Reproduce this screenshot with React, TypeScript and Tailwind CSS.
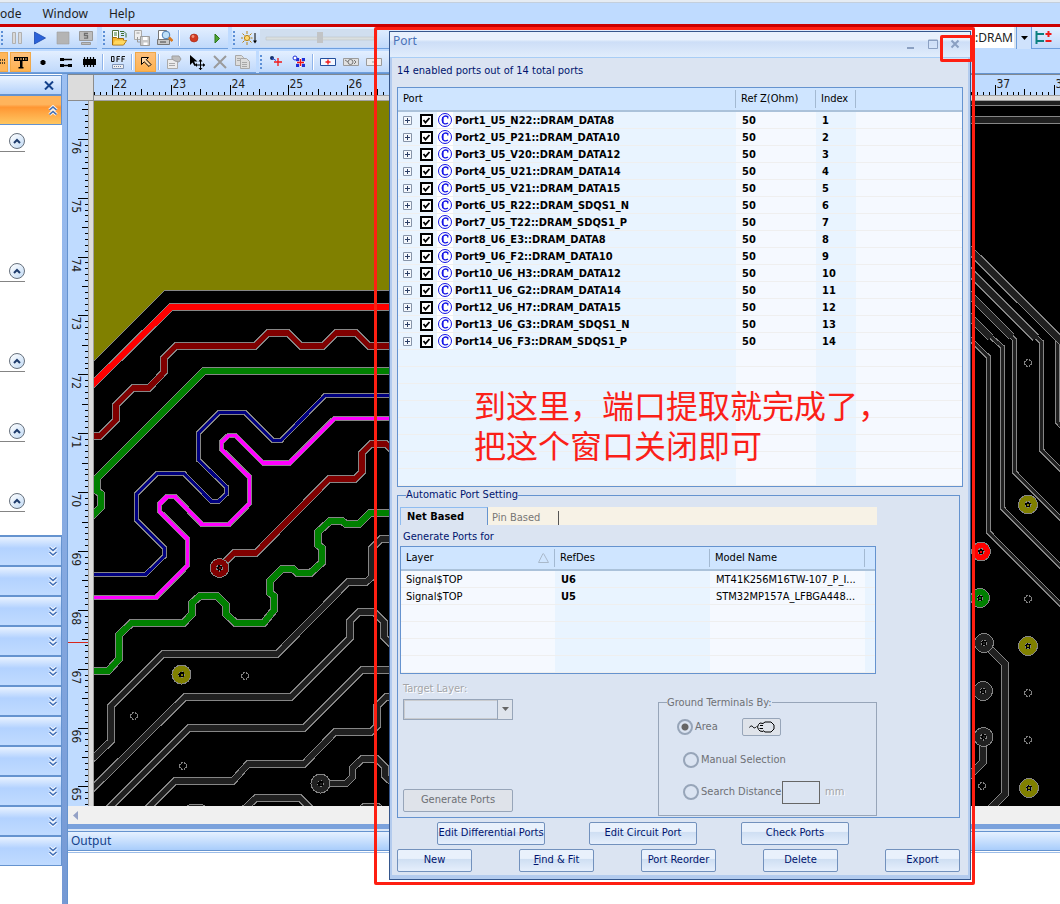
import type { ReactNode } from "react";

type Point = [number, number];

/* ------------------------------------------------------------------ */
/* Board canvas                                                        */
/* ------------------------------------------------------------------ */

function Trace({ points, color, width }: { points: Point[]; color: string; width: number }) {
  const path = points.map((p) => p.join(",")).join(" ");
  return (
    <g fill="none" strokeLinejoin="miter">
      <polyline points={path} stroke="#868686" strokeWidth={width + 2} />
      <polyline points={path} stroke={color} strokeWidth={width} />
    </g>
  );
}

function Via({ x, y, color }: { x: number; y: number; color: string }) {
  return (
    <g>
      <circle cx={x} cy={y} r={9.5} fill={color} stroke="#868686" />
      <circle cx={x} cy={y} r={3} fill="#000" stroke="#868686" strokeWidth={1} strokeDasharray="2 1.500" />
      <rect x={x - 1} y={y - 1} width={2} height={2} fill={color} />
    </g>
  );
}

function Hole({ x, y }: { x: number; y: number }) {
  return <circle cx={x} cy={y} r={3.5} fill="#000" stroke="#808080" strokeWidth={1.4} strokeDasharray="2 0.8" />;
}

const DARK = "#202020";
const OLIVE = "#808000";
const GREEN = "#008000";
const MAROON = "#800000";

const traces: { color: string; width: number; points: Point[] }[] = [
  { color: "#ff0000", width: 6, points: [[90, 387], [171, 307], [400, 307]] },
  {
    color: MAROON,
    width: 5.5,
    points: [[90, 436], [100, 436], [116, 420], [116, 405], [133, 388], [149, 388], [164, 372], [164, 358], [176, 346], [255, 346], [268, 333], [288, 333], [301, 346], [323, 346], [336, 333], [356, 333], [369, 346], [400, 346]],
  },
  { color: GREEN, width: 6, points: [[90, 518], [101, 507], [101, 494], [97, 491], [97, 478], [204, 371], [400, 371]] },
  {
    color: "#000080",
    width: 3,
    points: [[90, 574], [146, 574], [164.5, 556], [164.5, 548], [136.5, 520], [136.5, 494], [157, 473.5], [184, 473.5], [211, 501], [219, 501], [226.5, 494], [226.5, 487], [198.5, 460], [198.5, 433], [219, 412.5], [245, 412.5], [273, 440.5], [281, 440.5], [325, 395.5], [400, 395.5]],
  },
  {
    color: "#ff00ff",
    width: 3.6,
    points: [[90, 597.5], [156, 597.5], [187.5, 565.5], [187.5, 539], [159.5, 511.5], [159.5, 504], [167, 496.5], [175, 496.5], [202, 524.5], [229, 524.5], [249.5, 503.5], [249.5, 477], [221.5, 449.5], [221.5, 442], [228.5, 435.5], [235.5, 435.5], [263, 463], [289.5, 463], [334.5, 418.5], [400, 418.5]],
  },
  { color: MAROON, width: 5.5, points: [[220, 567], [234, 553], [256, 553], [329, 479], [355, 479], [362, 472], [362, 453], [371, 444], [386, 444], [392, 450]] },
  {
    color: GREEN,
    width: 6,
    points: [[90, 671], [108, 671], [119, 659], [119, 635], [132, 622.5], [184, 622.5], [192, 614], [192, 603], [200, 596], [217, 596], [226, 605], [226, 614], [235, 622.5], [264, 622.5], [274, 610], [274, 596], [270, 593], [270, 581], [282, 569], [293, 569], [297, 572.5], [311, 572.5], [322, 562.5], [322, 548], [318, 545], [318, 532], [330, 521], [342, 521], [346, 524], [359, 524], [370, 513], [400, 513]],
  },
  { color: DARK, width: 5.5, points: [[400, 539], [381, 539], [372, 548], [372, 577], [366, 582], [348, 582], [277, 654], [163, 654], [111, 706], [111, 741], [90, 761]] },
  { color: DARK, width: 5.5, points: [[400, 653], [384, 637], [384, 622], [374, 612], [359, 612], [350, 621], [350, 638], [291, 697], [185, 697], [90, 791]] },
  { color: DARK, width: 5.5, points: [[400, 670], [362, 670], [304, 728], [189, 728], [105, 812]] },
  { color: DARK, width: 5.5, points: [[400, 697], [386, 697], [377, 706], [377, 726], [371, 732], [335, 732], [304, 764], [248, 764], [233, 781], [175, 781], [144, 812]] },
  { color: DARK, width: 5.5, points: [[320, 783.5], [346, 783.5], [352.5, 777], [352.5, 768], [362, 759], [377, 759], [385, 767], [385, 776], [400, 790]] },
  { color: DARK, width: 5.5, points: [[241, 812], [256, 798], [300, 798], [314, 812]] },
  { color: DARK, width: 5.5, points: [[180, 814], [190, 808], [202, 808], [212, 814]] },
  { color: DARK, width: 5.5, points: [[355, 814], [364, 807], [378, 807], [387, 814]] },
  { color: DARK, width: 5, points: [[960, 102], [1400, 102]] },
  { color: DARK, width: 6, points: [[960, 120], [1400, 120]] },
  { color: DARK, width: 3.5, points: [[1057.5, 336], [1057.5, 422], [1090, 455]] },
  { color: DARK, width: 6.5, points: [[960, 240], [1090, 370]] },
  { color: DARK, width: 3, points: [[1035, 336], [1041.5, 342], [1041.5, 450], [1090, 499]] },
  { color: DARK, width: 6.5, points: [[960, 262], [1036, 338]] },
  { color: DARK, width: 3, points: [[1010, 335], [1014.5, 340], [1014.5, 472], [1090, 548]] },
  { color: DARK, width: 6, points: [[960, 285], [1012, 337]] },
  { color: DARK, width: 3, points: [[990, 336], [1002.5, 347], [1002.5, 508], [1090, 596]] },
  { color: DARK, width: 6, points: [[960, 307], [991, 338]] },
  { color: DARK, width: 3, points: [[960, 329], [988.5, 357], [988.5, 532], [1090, 634]] },
  { color: DARK, width: 6, points: [[984, 643], [1005, 664], [1005, 794], [985, 814]] },
  { color: DARK, width: 6, points: [[983, 738], [983, 762], [965, 780]] },
];

const vias: { x: number; y: number; color: string }[] = [
  { x: 219.5, y: 568, color: MAROON },
  { x: 181.5, y: 674.5, color: OLIVE },
  { x: 320.5, y: 783.5, color: DARK },
  { x: 1028, y: 504.5, color: OLIVE },
  { x: 981, y: 551.5, color: "#ff0000" },
  { x: 980, y: 598, color: GREEN },
  { x: 984, y: 643, color: DARK },
  { x: 1028, y: 646, color: OLIVE },
  { x: 983, y: 691, color: DARK },
  { x: 983.5, y: 737, color: DARK },
  { x: 1029, y: 788, color: OLIVE },
];

const holes: Point[] = [[245, 676], [134, 716], [183, 766], [1028, 363], [1028, 599], [1028, 693], [1028, 740], [982, 786]];

function Board() {
  return (
    <svg className="block h-full w-full bg-black" shapeRendering="crispEdges" aria-hidden="true">
      <g transform="translate(-94 -101)">
        <polygon points="94,100 400,100 400,290 164,290 94,361" fill={OLIVE} />
        <polyline points="400,290.5 164.5,290.5 94,361" fill="none" stroke="#868686" />
        {traces.map((t, i) => (
          <Trace key={i} {...t} />
        ))}
        {vias.map((v, i) => (
          <Via key={i} {...v} />
        ))}
        {holes.map(([x, y], i) => (
          <Hole key={i} x={x} y={y} />
        ))}
      </g>
    </svg>
  );
}

const UNIT = 58.87;

function ticks(count: number, first: number) {
  return Array.from({ length: count }, (_, i) => {
    const size = i % 10 === 0 ? 10 : i % 5 === 0 ? 6 : 3;
    return { at: Math.round(first + (i * UNIT) / 10) + 0.5, size, major: i % 10 === 0, index: i / 10 };
  }).filter((t) => t.at > 0);
}

function TopRuler() {
  return (
    <svg className="block h-[20px] w-full bg-[#bfdbff]" aria-hidden="true">
      {ticks(172, -41).map((t, i) => (
        <g key={i}>
          <line x1={t.at} x2={t.at} y1={20 - t.size} y2={20} stroke="#000" shapeRendering="crispEdges" />
          {t.major && (
            <text x={t.at + 1} y={13} fontSize={12} fill="#222" fontFamily="'DejaVu Sans Condensed','DejaVu Sans',sans-serif">
              {21 + t.index}
            </text>
          )}
        </g>
      ))}
    </svg>
  );
}

function SideRuler() {
  return (
    <svg className="block h-full w-[20px] bg-[#bfdbff]" aria-hidden="true">
      {ticks(125, -21).map((t, i) => (
        <g key={i}>
          <line y1={t.at} y2={t.at} x1={20 - t.size} x2={20} stroke="#000" shapeRendering="crispEdges" />
          {t.major && (
            <text transform={`translate(4 ${t.at + 1}) rotate(90)`} fontSize={12} fill="#222" fontFamily="'DejaVu Sans Condensed','DejaVu Sans',sans-serif">
              {77 - t.index}
            </text>
          )}
        </g>
      ))}
      <line x1={0} x2={20} y1={541.5} y2={541.5} stroke="#d8261c" />
    </svg>
  );
}

/* ------------------------------------------------------------------ */
/* Toolbars                                                            */
/* ------------------------------------------------------------------ */

function Grip() {
  return (
    <svg width="5" height="16" viewBox="0 0 5 16" className="shrink-0" aria-hidden="true">
      {[0, 4, 8, 12].map((y) => (
        <rect key={y} x="1" y={y + 1} width="2" height="2" fill="#5c8fd6" />
      ))}
    </svg>
  );
}

function Strip({ children, className = "" }: { children: ReactNode; className?: string }) {
  return (
    <div className={`flex h-[22px] shrink-0 items-center border-b border-[#6e9fde] bg-linear-to-b from-[#e3efff] to-[#c0d9fb] ${className}`}>
      {children}
    </div>
  );
}

function Separator() {
  return <span className="mx-[2px] h-4 w-[2px] shrink-0 border-l border-[#8fb4ea] bg-white" />;
}

function Tool({ label, active = false, children }: { label: string; active?: boolean; children: ReactNode }) {
  return (
    <button
      type="button"
      aria-label={label}
      className={
        active
          ? "flex h-5 w-[21px] shrink-0 items-center justify-center border border-[#f0a848] bg-linear-to-b from-[#fdc07c] to-[#ffb24e]"
          : "flex h-5 w-[23px] shrink-0 items-center justify-center"
      }
    >
      <svg width="16" height="16" viewBox="0 0 16 16" className="shrink-0">
        {children}
      </svg>
    </button>
  );
}

function Toolbars() {
  return (
    <div className="h-[46px] overflow-hidden bg-[#bfdbff]">
      <div className="flex">
        <Strip className="w-[97px]">
          <Grip />
          <Tool label="Pause">
            <path d="M3.500 2.500h3v11h-3zM9.500 2.500h3v11h-3z" fill="#d9d9d9" stroke="#b0b0b0" />
          </Tool>
          <Tool label="Run">
            <path d="M2.500 2v12L13.500 8z" fill="#2b62d9" stroke="#1b49ae" strokeWidth=".8" />
          </Tool>
          <Tool label="Stop">
            <path d="M2 2h12v12H2z" fill="#b4b4b4" stroke="#9d9d9d" strokeWidth=".6" />
          </Tool>
          <Tool label="Solver">
            <path d="M1.500 1.500h13v9h-13zM3.500 12.500h9v2h-9z" fill="#bdbdbd" stroke="#999" />
            <path d="M10 3.500H6.500v2.200h3v2.500H6" fill="none" stroke="#6f6f6f" strokeWidth="1.300" />
          </Tool>
        </Strip>
        <Strip className="ml-[5px] w-[126px]">
          <Grip />
          <Tool label="Open">
            <path d="M1.500.5h6v10h-6z" fill="#fff" stroke="#55703c" />
            <path d="M3 3h3M3 5h3" stroke="#3a7a38" />
            <path d="M9 1.500h4l2 2v4M10 3.500h3M10 5.500h3" fill="none" stroke="#3b6d33" />
            <path d="M1.500 15V7.500h4l1 1h6v2h3l-3 4.500z" fill="#f5b832" stroke="#a26a0c" />
            <path d="M4 10.500h11L12.500 14.500H2z" fill="#ffd75e" />
          </Tool>
          <Tool label="Import">
            <path d="M.5.5h7v9h-7z" fill="#eee" stroke="#ababab" />
            <path d="M6.500 6.500h9v9h-9z" fill="#c9c9c9" stroke="#9d9d9d" />
            <path d="M9 7h4.500v3H9zM9.500 12.500h4v2.500h-4z" fill="#fff" />
            <path d="M2.500 3h3M3.500 7v5h3" fill="none" stroke="#999" />
          </Tool>
          <Tool label="Preview">
            <path d="M1.500.5h8v11h-8z" fill="#fff" stroke="#777" />
            <path d="M.5 9.500h12v5H.5z" fill="#c7c7c7" stroke="#777" />
            <path d="M3 12h6" stroke="#444" />
            <circle cx="9" cy="5" r="3.800" fill="#bfe0f8" stroke="#4e7fb5" />
            <path d="M12 7.500l3.500 3.500" stroke="#d9791e" strokeWidth="2.600" />
          </Tool>
          <Separator />
          <Tool label="Record">
            <circle cx="8" cy="8" r="4" fill="#cf3a22" stroke="#a32714" strokeWidth=".6" />
            <circle cx="7" cy="6.500" r="1.400" fill="#f09078" />
          </Tool>
          <Tool label="Step">
            <path d="M6 4v9l4.500-4.500z" fill="#4ea632" stroke="#2b741a" />
          </Tool>
        </Strip>
        <Strip className="ml-1 min-w-0 flex-1">
          <Grip />
          <Tool label="Brightness">
            <g stroke="#b88416" fill="none">
              <path d="M6 1v3M6 12v3M-1 8h3M9.500 8h2M1.500 3.500l2 2M8.500 10.500l2 2M10.500 3.500l-2 2M3.500 10.500l-2 2" />
              <circle cx="6" cy="8" r="2.600" fill="#ffd970" />
            </g>
            <path d="M14 3v9" stroke="#000" />
            <path d="M12 10.500h4L14 13.500z" />
          </Tool>
          <svg width="118" height="18" viewBox="0 0 118 18" className="shrink-0" aria-hidden="true">
            <rect width="118" height="18" fill="#d0deef" />
            <path d="M6 8h108v3H6z" fill="#dadfdf" stroke="#bcc3c8" strokeWidth=".6" />
            <path d="M57 3h6v11h-6z" fill="#c2c4c6" />
          </svg>
        </Strip>
        <div className="flex h-[22px] shrink-0">
          <input
            aria-label="Net name"
            defaultValue=":DRAM"
            className="h-[21px] w-[41px] border-r-2 border-[#dce6f0] bg-white font-['Noto_Sans',sans-serif] text-[12px] text-[#222] outline-none"
          />
          <button type="button" aria-label="Show nets" className="flex w-4 items-center justify-center border-x border-[#6e9fde] bg-[#cfe2fc]">
            <svg width="7" height="4" viewBox="0 0 7 4"><path d="M0 0h7L3.500 4z" /></svg>
          </button>
          <div className="flex h-[22px] w-7 items-center border-b border-[#6e9fde] bg-linear-to-b from-[#e3efff] to-[#c0d9fb]">
            <button type="button" aria-label="Expand nets" className="pl-[3px]">
              <svg width="17" height="16" viewBox="0 0 17 16" fill="none" className="block">
                <path d="M1.500 1v13M1 4h8M1 11h8" stroke="#0b8080" strokeWidth="2" />
                <path d="M10.500 4h6M13.500 1v6M10.500 11h6" stroke="#f01818" strokeWidth="2" />
              </svg>
            </button>
          </div>
        </div>
      </div>

      <div className="mt-[2px] flex">
        <Strip className="w-[256px]">
          <button type="button" aria-label="Trace" className="flex h-5 w-2 shrink-0 items-center border border-l-0 border-[#f0a848] bg-[#ffb65a]">
            <svg width="6" height="6" viewBox="0 0 6 6"><path d="M0 1h5M0 4h5" stroke="#222" strokeDasharray="1 1" strokeWidth="1.500" /></svg>
          </button>
          <span className="w-[2px] shrink-0" />
          <Tool label="Plane" active>
            <path d="M1 3.500h14M1 6.500h14" stroke="#000" />
            <path d="M1 5h14" stroke="#000" strokeWidth="2" strokeDasharray="1.500 1" />
            <path d="M7 7h2.500v6H7zM5.500 13h5v1.500h-5z" />
          </Tool>
          <Tool label="Node">
            <path d="M6.500 6h3v1h1v3h-1v1h-3v-1h-1V7h1z" />
          </Tool>
          <Tool label="Differential pair">
            <path d="M2 5.500h12M2 11.500h12" stroke="#000" strokeWidth="1.500" />
            <path d="M2 4h4v3H2zM2 10h4v3H2zM10 10h4v3h-4z" />
          </Tool>
          <Tool label="Component">
            <path d="M2 5h13v6H2z" />
            <path d="M3.500 3v10M6.500 3v10M9.500 3v10M12.500 3v10" stroke="#000" strokeWidth="1.200" />
          </Tool>
          <Separator />
          <Tool label="Off">
            <path d="M1.500 2.500h2.500v5H1.500zM7 8V2.500h3M7 5h2.500M12 8V2.500h3M12 5h2.500" fill="none" stroke="#111" />
            <path d="M2.500 10.500h11v4h-11z" fill="#eee" stroke="#8295b5" />
            <path d="M4 12.500h8" stroke="#6c80a8" strokeDasharray="1 1" />
          </Tool>
          <Separator />
          <Tool label="Select" active>
            <path d="M3.500 3.500h7l-2.200 2.200 4.700 4.800-2 2-4.800-4.700L3.500 10.500z" fill="#ffd9a8" stroke="#000" />
          </Tool>
          <Separator />
          <Tool label="Properties">
            <path d="M1.500 5.500h10v9h-10z" fill="#ececec" stroke="#ababab" />
            <path d="M6 2h7l2 3-2 3-4-1-3-2z" fill="#bdbdbd" stroke="#9f9f9f" />
            <path d="M3 9.500h6M3 11.500h6" stroke="#aaa" />
          </Tool>
          <Tool label="Move">
            <path d="M1 1v10l2.500-2.500L5.500 12l1.500-1-2-3.500h3.500z" />
            <path d="M11.500 6v10M6.500 11h10" stroke="#000" />
            <path d="M9.500 7.500l2-2.500 2 2.500zM9.500 14l2 2 2-2zM8 9l-2 2 2 2zM14 9l2 2-2 2z" />
          </Tool>
          <Tool label="Delete item">
            <path d="M2 2l12 12M14 2L2 14" stroke="#9b9b9b" strokeWidth="2" />
          </Tool>
          <Tool label="Copy">
            <g fill="#dcdcdc" stroke="#a8a8a8">
              <path d="M.5 1.500h6l2 2v8h-8z" />
              <path d="M5.500 4.500h6l3 3v7h-9z" />
              <path d="M2 4.500h3M2 6.500h3M7 8.500h5M7 10.500h5M7 12.500h5" />
            </g>
          </Tool>
        </Strip>
        <Strip className="ml-[3px] min-w-0 max-w-[704px] flex-1">
          <Grip />
          <Tool label="Add node">
            <circle cx="4" cy="4" r="2" fill="#14306a" />
            <path d="M10 4v8M6 8h8" stroke="#f01818" strokeWidth="1.300" />
            <path d="M4 4l4 2.500" stroke="#2146d5" />
          </Tool>
          <Tool label="Add nodes">
            <path d="M5 4h9v9H5z" fill="#1e2fd6" />
            <path d="M9.500 4v9M5 8.500h9" stroke="#fff" strokeWidth="2.500" />
            <path d="M9.500 5v7M6 8.500h7" stroke="#f01818" strokeWidth="1.300" />
            <circle cx="4" cy="4" r="2" fill="#fff" stroke="#1e2fd6" />
          </Tool>
          <Separator />
          <Tool label="Add area">
            <path d="M.5 4.500h15v7H.5z" fill="#f4f8ff" stroke="#234f9c" />
            <path d="M8 5.500v5M5.500 8h5" stroke="#f01818" strokeWidth="1.400" />
          </Tool>
          <Tool label="View area">
            <path d="M.5 4.500h15v7H.5z" fill="#e0e0e0" stroke="#9b9b9b" />
            <circle cx="7.500" cy="8" r="2.500" fill="none" stroke="#777" />
            <path d="M2 6l3 2M11 6l2 2-2 2" stroke="#777" fill="none" />
          </Tool>
          <Tool label="Edit area">
            <path d="M.5 4.500h15v7H.5z" fill="#ececec" stroke="#9b9b9b" />
            <path d="M6 8h5" stroke="#999" />
          </Tool>
        </Strip>
      </div>
    </div>
  );
}

/* ------------------------------------------------------------------ */
/* Workflow sidebar                                                    */
/* ------------------------------------------------------------------ */

function DoubleChevron({ up = false }: { up?: boolean }) {
  return (
    <svg width="10" height="11" viewBox="0 0 10 11" fill="none" className={up ? "rotate-180" : ""} aria-hidden="true">
      <path d="M1.500 1.500L5 4.500l3.500-3M1.500 6L5 9l3.500-3" stroke="#fff" strokeWidth="3.600" opacity=".85" />
      <path d="M1.500 1.500L5 4.500l3.500-3M1.500 6L5 9l3.500-3" stroke="#3e6cb4" strokeWidth="1.600" />
    </svg>
  );
}

function StepSection({ className }: { className: string }) {
  return (
    <div className={`flex items-end ${className}`}>
      <div className="flex w-[25px] justify-end border-b border-[#848484] pb-[2px]">
        <button type="button" aria-label="Collapse section" className="flex size-4 items-center justify-center rounded-full border border-[#66707c] bg-linear-to-br from-white to-[#c3dbf5]">
          <svg width="8" height="6" viewBox="0 0 8 6" fill="none"><path d="M1 5l3-3 3 3" stroke="#1f3c6c" strokeWidth="2" /></svg>
        </button>
      </div>
    </div>
  );
}

const collapsedGroups = Array.from({ length: 11 }, (_, i) => i);

function Sidebar() {
  return (
    <aside className="w-[62px] shrink-0 bg-white">
      <div className="mt-px flex h-[20px] items-center justify-end border-y border-r border-[#6593cf] bg-linear-to-b from-[#eaf3ff] to-[#b6d3fb] pr-[7px]">
        <button type="button" aria-label="Close panel">
          <svg width="10" height="9" viewBox="0 0 10 9" className="block"><path d="M1 .5l8 8M9 .5l-8 8" stroke="#15428b" strokeWidth="2" /></svg>
        </button>
      </div>
      <button type="button" aria-label="Collapse workflow" className="flex h-[30px] w-full items-center justify-end border-y border-r border-[#6593cf] bg-linear-to-b from-[#ffb45c] from-30% via-[#ff9632] via-40% to-[#ffc660] pr-[3px]">
        <DoubleChevron up />
      </button>
      <StepSection className="h-[27px]" />
      <StepSection className="h-[130px]" />
      <StepSection className="h-[90px]" />
      <StepSection className="h-[70px]" />
      <StepSection className="h-[70px]" />
      <div className="mt-[23px] border-b border-[#6593cf]">
        {collapsedGroups.map((g) => (
          <button
            key={g}
            type="button"
            aria-label={`Expand group ${g + 1}`}
            className="flex h-[30px] w-full items-center justify-end border-t-2 border-r border-[#6593cf] bg-linear-to-b from-[#e2eeff] from-5% via-[#b3d2ff] via-40% to-[#c0dbff] pr-[3px]"
          >
            <DoubleChevron />
          </button>
        ))}
      </div>
    </aside>
  );
}

/* ------------------------------------------------------------------ */
/* Port dialog                                                         */
/* ------------------------------------------------------------------ */

const ports = [
  "Port1_U5_N22::DRAM_DATA8",
  "Port2_U5_P21::DRAM_DATA10",
  "Port3_U5_V20::DRAM_DATA12",
  "Port4_U5_U21::DRAM_DATA14",
  "Port5_U5_V21::DRAM_DATA15",
  "Port6_U5_R22::DRAM_SDQS1_N",
  "Port7_U5_T22::DRAM_SDQS1_P",
  "Port8_U6_E3::DRAM_DATA8",
  "Port9_U6_F2::DRAM_DATA10",
  "Port10_U6_H3::DRAM_DATA12",
  "Port11_U6_G2::DRAM_DATA14",
  "Port12_U6_H7::DRAM_DATA15",
  "Port13_U6_G3::DRAM_SDQS1_N",
  "Port14_U6_F3::DRAM_SDQS1_P",
];
const portRows = Array.from({ length: 22 }, (_, i) => ports[i] ?? null);

const models = [
  { layer: "Signal$TOP", ref: "U6", model: "MT41K256M16TW-107_P_I..." },
  { layer: "Signal$TOP", ref: "U5", model: "STM32MP157A_LFBGA448..." },
];
const modelRows = Array.from({ length: 6 }, (_, i) => models[i] ?? null);

const cellA = "border-b border-[#efefef] bg-[#e9f4ff] p-0 align-bottom";
const cellB = "border-b border-[#efefef] bg-[#f5f9ff] p-0 align-bottom";

function Head({ children, sort = false, bar = true, pad = "pl-[5px]" }: { children?: ReactNode; sort?: boolean; bar?: boolean; pad?: string }) {
  return (
    <th className="border-b-2 border-[#abc2da] bg-[#cfe5ff] p-0 text-left font-normal text-black">
      <div className={`flex h-[18px] items-center justify-between pr-1 ${pad} ${bar ? "border-r border-[#a3b9d2]" : ""}`}>
        {children}
        {sort && (
          <svg width="11" height="10" viewBox="0 0 11 10" className="mr-px"><path d="M5 .5L.5 9.500h10L5.500.5" fill="none" stroke="#a9b9cb" /></svg>
        )}
      </div>
    </th>
  );
}

function PortTable() {
  return (
    <div className="border border-[#6593cf]">
      <table className="w-full table-fixed border-collapse">
        <colgroup>
          <col />
          <col className="w-[80px]" />
          <col className="w-[40px]" />
          <col className="w-[106px]" />
        </colgroup>
        <thead>
          <tr className="h-[23px]">
            <Head>Port</Head>
            <Head>Ref Z(Ohm)</Head>
            <Head>Index</Head>
            <Head bar={false} />
          </tr>
        </thead>
        <tbody>
          {portRows.map((name, i) => (
            <tr key={i} className="h-[17px] font-bold text-black">
              <td className={cellA}>
                {name && (
                  <div className="flex h-4 items-center pl-[5px]">
                    <button type="button" aria-label={`Expand ${name}`} className="mr-2 shrink-0">
                      <svg width="9" height="9" viewBox="0 0 9 9" className="block">
                        <path d="M.5.5h8v8h-8z" fill="#f4f8fd" stroke="#8794a8" />
                        <path d="M4.500 2v5M2 4.500h5" stroke="#2c3f66" />
                      </svg>
                    </button>
                    <label className="flex items-center">
                      <span className="grid shrink-0 bg-white">
                        <input
                          type="checkbox"
                          defaultChecked
                          className="peer col-start-1 row-start-1 size-[13px] appearance-none border-2 border-black bg-white"
                        />
                        <svg width="13" height="13" viewBox="0 0 13 13" className="pointer-events-none invisible col-start-1 row-start-1 peer-checked:visible">
                          <path d="M3.500 6l2 2.500L9.500 4" fill="none" stroke="#000" strokeWidth="1.800" />
                        </svg>
                      </span>
                      <svg width="16" height="16" viewBox="0 0 16 16" className="mr-[2px] ml-1 shrink-0" aria-hidden="true">
                        <path d="M0 0h16v16H0z" fill="#fff" />
                        <circle cx="8" cy="8" r="6.500" fill="none" stroke="#1414e6" strokeWidth="1" />
                        <path d="M10.800 6.500V4.600C8.600 3.400 5.200 4 5.200 8s3.400 4.600 5.800 3" fill="none" stroke="#1414e6" strokeWidth="1.300" />
                        <path d="M5.800 5.500v5" stroke="#1414e6" strokeWidth="1.600" />
                      </svg>
                      <span className="self-end">{name}</span>
                    </label>
                  </div>
                )}
              </td>
              <td className={cellB}><span className="pl-[6px]">{name && "50"}</span></td>
              <td className={cellA}><span className="pl-[6px]">{name && i + 1}</span></td>
              <td className={cellB} />
            </tr>
          ))}
        </tbody>
      </table>
    </div>
  );
}

function ModelTable() {
  return (
    <div className="w-[476px] border border-[#6593cf]">
      <table className="w-full table-fixed border-collapse text-black">
        <colgroup>
          <col className="w-[154px]" />
          <col className="w-[155px]" />
          <col className="w-[155px]" />
          <col />
        </colgroup>
        <thead>
          <tr className="h-[23px]">
            <Head sort>Layer</Head>
            <Head>RefDes</Head>
            <Head>Model Name</Head>
            <Head bar={false} />
          </tr>
        </thead>
        <tbody>
          {modelRows.map((row, i) => (
            <tr key={i} className="h-[17px]">
              <td className={cellB}><span className="pl-[5px]">{row?.layer}</span></td>
              <td className={cellA}><span className="pl-[6px] font-bold">{row?.ref}</span></td>
              <td className={`${cellB} whitespace-nowrap`}><span className="pl-[6px]">{row?.model}</span></td>
              <td className={cellA} />
            </tr>
          ))}
        </tbody>
      </table>
    </div>
  );
}

function DialogButton({ children, className }: { children: ReactNode; className: string }) {
  return (
    <button
      type="button"
      className={`h-[23px] rounded-[2px] border border-[#7291bd] bg-linear-to-b from-[#e9f1fc] from-40% via-[#cfdff3] via-45% to-[#e6effc] text-center whitespace-nowrap text-[#00146e] ${className}`}
    >
      {children}
    </button>
  );
}

const radioClass =
  "size-4 shrink-0 appearance-none rounded-full border-2 border-[#97a5b9] bg-[#dbe4f2] checked:bg-[radial-gradient(circle,#666_3px,transparent_4px)]";

function PortDialog() {
  return (
    <section
      role="dialog"
      aria-label="Port"
      className="absolute top-[31px] left-[389px] w-[582px] border border-[#35568c] bg-[#b3cbee] px-[2px] pb-1 font-['DejaVu_Sans_Condensed','DejaVu_Sans',sans-serif] text-[11px] leading-[14px]"
    >
      <header className="-mx-[2px] flex h-[26px] items-center justify-between border-b border-[#a8cdf5] bg-linear-to-b from-[#e8f1fd] from-30% via-[#cddef7] via-40% to-[#e1edfc] pr-[10px] pb-[2px] pl-[3px]">
        <h1 className="pb-[6px] font-['Noto_Sans',sans-serif] text-[12px] text-[#4a72b8]">Port</h1>
        <div className="flex items-center gap-3 text-[#8ba0c2]">
          <button type="button" aria-label="Minimize">
            <svg width="10" height="10" viewBox="0 0 10 10"><path d="M1 8h7v2H1z" fill="currentColor" /></svg>
          </button>
          <button type="button" aria-label="Maximize">
            <svg width="10" height="10" viewBox="0 0 10 10"><path d="M.5 1h9v8.500h-9zM0 1.500h10" fill="none" stroke="currentColor" /></svg>
          </button>
          <button type="button" aria-label="Close">
            <svg width="10" height="10" viewBox="0 0 10 10"><path d="M1.500 1.500l7 7M8.500 1.500l-7 7" stroke="currentColor" strokeWidth="2" /></svg>
          </button>
        </div>
      </header>

      <div className="flex flex-col bg-[#dbe4f2] px-[5px] pb-[3px] text-[#00146e]">
        <p className="flex h-[29px] items-center pb-1">14 enabled ports out of 14 total ports</p>
        <PortTable />

        <fieldset className="mr-[3px] mt-px min-w-0 border border-[#6593cf] px-[2px] pb-px">
          <legend className="ml-[6px] leading-[14px]">Automatic Port Setting</legend>
          <div className="mt-[5px] flex w-[477px] items-stretch bg-[#f7f2e6]" role="tablist">
            <button type="button" role="tab" aria-selected="true" className="h-[18px] w-[88px] border-t border-r border-l border-[#8fbcf0] border-r-[#6593cf] bg-[#dbe4f2] pl-[6px] text-left font-bold text-black">
              Net Based
            </button>
            <button type="button" role="tab" aria-selected="false" className="mt-1 w-[71px] border-r border-[#555] pl-1 text-left leading-[12px] text-[#777]">
              Pin Based
            </button>
          </div>
          <p className="mt-[5px] mb-[2px] ml-[3px]">Generate Ports for</p>
          <ModelTable />

          <div className="flex justify-between pr-[80px]">
            <div className="ml-[3px] flex flex-col">
              <label htmlFor="target-layer" className="mt-2 mb-[3px] text-[#a3a5a9] [text-shadow:1px_1px_0_#fff]">Target Layer:</label>
              <div className="grid w-[110px]">
                <select id="target-layer" disabled className="col-start-1 row-start-1 h-[21px] w-full appearance-none border border-[#97a5b9] bg-[#dbe4f2] inset-ring inset-ring-[#c9cbcf]">
                  <option />
                </select>
                <span className="pointer-events-none col-start-1 row-start-1 flex w-4 items-center justify-center justify-self-end border border-[#97a5b9] bg-[#dfe4ec]">
                  <svg width="7" height="4" viewBox="0 0 7 4"><path d="M0 0h7L3.500 4z" fill="#666" /></svg>
                </span>
              </div>
              <button type="button" disabled className="mt-auto mb-1 h-[23px] w-[110px] rounded-[2px] border border-[#97a5b9] bg-[#dfe3ea] text-[#6e7075]">
                Generate Ports
              </button>
            </div>

            <fieldset className="mt-[22px] h-[120px] w-[219px] min-w-0 border border-[#97a5b9] text-[#6e7075]">
              <legend className="ml-2 leading-[14px]">Ground Terminals By:</legend>
              <div className="flex flex-col pl-[18px]">
                <div className="mt-2 flex h-[18px] items-center">
                  <label className="flex w-[65px] items-center gap-[2px]"><input type="radio" name="ground" defaultChecked className={radioClass} />Area</label>
                  <button type="button" aria-label="Pick area" className="flex h-[18px] w-[39px] items-center justify-center rounded-[2px] border border-[#97a5b9] bg-[#dfe3ea]">
                    <svg width="26" height="12" viewBox="0 0 26 12" fill="none" stroke="#000" className="shrink-0">
                      <path d="M.5 6.500c1-2 2.500-2 3.500-.5s2.500 1 3.500-.5" />
                      <path d="M14 2.500l-3-.5-1.500 1.500L8.500 6l1 2.500 1.500 1.500 3 .5M11 4.500h3M10.500 7.500h3.500M14 2.500l2-1.500h6l3 3v4l-3 3h-6l-2-1.500" />
                    </svg>
                  </button>
                </div>
                <label className="mt-[15px] ml-[6px] flex h-[18px] items-center gap-[2px]"><input type="radio" name="ground" className={radioClass} />Manual Selection</label>
                <div className="mt-3 ml-[6px] flex h-[23px] items-center">
                  <label className="flex w-[99px] items-center gap-[2px] whitespace-nowrap"><input type="radio" name="ground" className={radioClass} />Search Distance</label>
                  <input aria-label="Search distance in mm" disabled className="h-[23px] w-[38px] border border-[#666] bg-[#dbe4f2]" />
                  <span className="ml-[5px] text-[#a3a5a9] [text-shadow:1px_1px_0_#fff]">mm</span>
                </div>
              </div>
            </fieldset>
          </div>
        </fieldset>

        <div className="mt-1 flex gap-[44px] pl-[40px]">
          <DialogButton className="w-[108px]">Edit Differential Ports</DialogButton>
          <DialogButton className="w-[108px]">Edit Circuit Port</DialogButton>
          <DialogButton className="w-[108px]">Check Ports</DialogButton>
        </div>
        <div className="mt-1 mr-[3px] flex justify-between">
          <DialogButton className="w-[75px]">New</DialogButton>
          <DialogButton className="w-[75px]"><span className="underline">F</span>ind &amp; Fit</DialogButton>
          <DialogButton className="w-[75px]">Port Reorder</DialogButton>
          <DialogButton className="w-[75px]">Delete</DialogButton>
          <DialogButton className="w-[75px]">Export</DialogButton>
        </div>
      </div>
    </section>
  );
}

/* ------------------------------------------------------------------ */
/* Page                                                                */
/* ------------------------------------------------------------------ */

export default function App() {
  return (
    <div className="relative flex h-screen min-h-[904px] flex-col overflow-hidden bg-[#bfdbff]">
      <div className="h-[3px] shrink-0 border-b border-[#c4cfdc] bg-[#e6ecf3]" />
      <nav className="flex h-[21px] shrink-0 items-center gap-[21px] font-['Noto_Sans',sans-serif] text-[12px] text-[#1e1e1e]">
        <button type="button">ode</button>
        <button type="button">Window</button>
        <button type="button">Help</button>
      </nav>
      <div className="h-[3px] shrink-0 bg-[#cc0000]" />
      <Toolbars />

      <div className="flex min-h-0 flex-1 border-t border-[#6593cf]">
        <Sidebar />
        <div className="w-[5px] shrink-0 bg-linear-to-b from-[#9dc0f2] to-[#7599d4]" />
        <main className="flex min-w-0 flex-1 flex-col border-l border-[#6593cf]">
          <div className="flex shrink-0 border-t border-[#808890]">
            <div className="h-[26px] w-[26px] shrink-0 border-r border-b border-[#8c8c8c] bg-[#dcdcdc]" />
            <div className="min-w-0 flex-1">
              <TopRuler />
              <div className="h-[6px] border-t border-b border-[#a0a0a0] bg-[#dcdcdc]" />
            </div>
          </div>
          <div className="flex min-h-0 flex-1">
            <SideRuler />
            <div className="w-[6px] shrink-0 border-r border-l border-[#a0a0a0] bg-[#dcdcdc]" />
            <div className="min-w-0 flex-1">
              <Board />
            </div>
          </div>
          <div className="flex h-[18px] shrink-0 items-center bg-[#f0f0f0] pl-[5px]">
            <svg width="5" height="9" viewBox="0 0 5 9" aria-hidden="true"><path d="M5 0v9L0 4.500z" fill="#93a1c6" /></svg>
          </div>
          <div className="h-[5px] shrink-0 bg-[#7ba2dc]" />
          <div className="h-[2px] shrink-0 bg-[#dbe8f8]" />
          <section className="flex h-[73px] shrink-0 flex-col bg-white">
            <h2 className="h-[20px] border-y border-[#6593cf] bg-linear-to-b from-[#e6f1ff] to-[#a9cdfb] pl-[3px] font-['Noto_Sans',sans-serif] text-[12px] leading-[18px] text-[#15428b]">Output</h2>
            <div className="mt-px border-t border-[#9dbde8]" />
          </section>
        </main>
      </div>

      <PortDialog />

      <div className="pointer-events-none absolute top-[384px] left-[474px] font-['Noto_Sans_CJK_SC',sans-serif] text-[32px] leading-[40px] whitespace-nowrap text-[#fb2018]">
        <p>到这里，端口提取就完成了，</p>
        <p>把这个窗口关闭即可</p>
      </div>
      <div className="pointer-events-none absolute top-[27px] left-[374px] h-[858px] w-[601px] rounded-[2px] border-3 border-[#fe1f12]" />
      <div className="pointer-events-none absolute top-[35px] left-[940px] h-[27px] w-[33px] rounded-[2px] border-3 border-[#fe1f12]" />
    </div>
  );
}
